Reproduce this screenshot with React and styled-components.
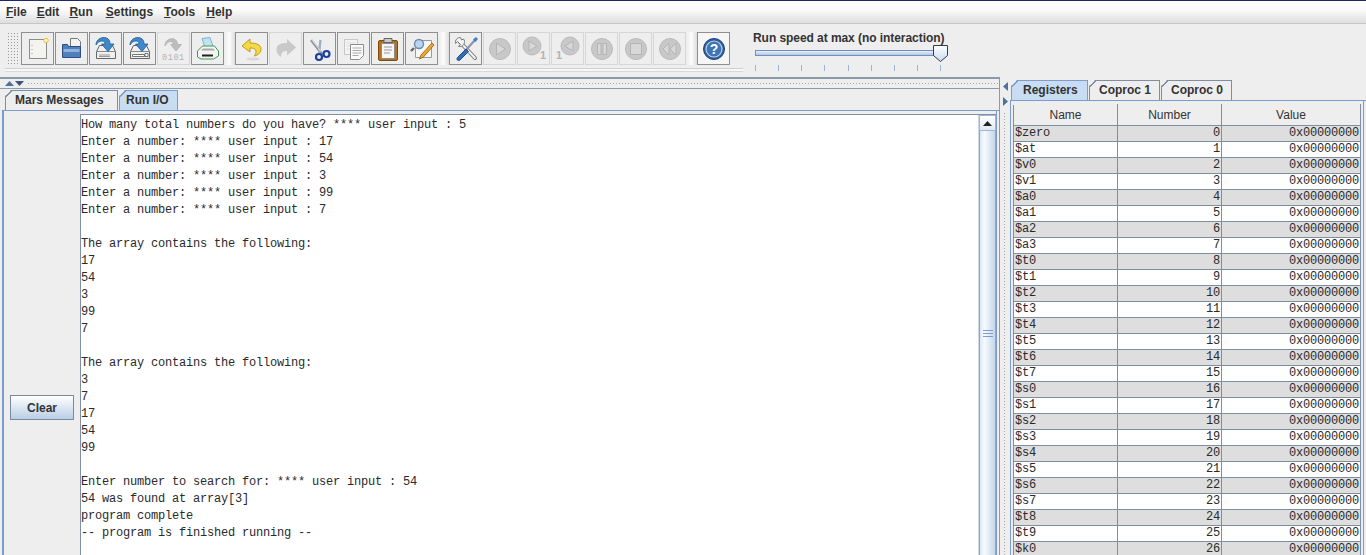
import React from 'react';
import styled, { createGlobalStyle } from 'styled-components';

const GlobalStyle = createGlobalStyle`
  html, body {
    margin: 0;
    padding: 0;
    background: #eeeeee;
    overflow: hidden;
  }
`;

const Frame = styled.div`
  width: 1366px;
  height: 555px;
  overflow: hidden;
  display: flex;
  flex-direction: column;
  background: #eeeeee;
  border-top: 1px solid #1c2a63;
  box-sizing: border-box;
  font-family: 'Liberation Sans', Arial, sans-serif;
  color: #333333;
`;

const MenuBar = styled.div`
  height: 22px;
  flex: none;
  display: flex;
  align-items: center;
  padding-left: 6px;
  background: linear-gradient(#ffffff, #fbfbfb 40%, #dedede);
  border-bottom: 1px solid #c6c6c6;
`;

const MenuItem = styled.span`
  font-size: 12px;
  font-weight: bold;
  margin-right: ${(p) => p.$gap}px;
  color: #333333;
  u { text-underline-offset: 1px; }
`;

const ToolRow = styled.div`
  height: 53px;
  flex: none;
  display: flex;
  padding-left: 5px;
`;

const ToolStrip = styled.div`
  width: 738px;
  height: 45px;
  box-sizing: border-box;
  display: flex;
  align-items: flex-start;
  padding-top: 8px;
  border-bottom: 1px solid #d0d0d0;
  box-shadow: 0 2px 0 #f7f7f7, 0 3px 0 #d8d8d8;
`;

const Gripper = styled.div`
  width: 13px;
  height: 33px;
  margin: 0 1px 0 2px;
  background-image: radial-gradient(#9a9a9a 0.8px, transparent 1px);
  background-size: 3px 3px;
`;

const ToolButton = styled.div`
  width: 33px;
  height: 33px;
  box-sizing: border-box;
  flex: none;
  margin-right: 1px;
  display: flex;
  align-items: center;
  justify-content: center;
  border: 1px solid ${(p) => (p.$off ? '#d6d6d6' : '#8f8f8f')};
  background: ${(p) => (p.$light ? '#f6f6f6' : '#eeeeee')};
`;

const GroupGap = styled.div`
  width: 10px;
  height: 33px;
  flex: none;
  background: linear-gradient(90deg, #eeeeee, #fcfcfc 45%, #dcdcdc);
`;

const SpeedPanel = styled.div`
  margin-left: 10px;
  padding-top: 7px;
  width: 200px;
`;

const SpeedLabel = styled.div`
  font-size: 12px;
  font-weight: bold;
  line-height: 14px;
  letter-spacing: -0.06px;
`;

const SliderBox = styled.div`
  position: relative;
  width: 194px;
  height: 16px;
`;

const SliderTrack = styled.div`
  position: absolute;
  left: 2px;
  top: 5px;
  width: 181px;
  height: 6px;
  box-sizing: border-box;
  border: 1px solid #6f8fc4;
  background: linear-gradient(#e6eef8, #b4c8e2);
`;

const SliderThumb = styled.svg`
  position: absolute;
  left: 180px;
  top: 0;
`;

const Ticks = styled.div`
  width: 186px;
  margin: 4px 0 0 2px;
  display: flex;
  justify-content: space-between;
`;

const Tick = styled.i`
  display: block;
  width: 1px;
  height: 6px;
  background: #9db5d2;
`;

const Main = styled.div`
  flex: 1;
  min-height: 0;
  display: flex;
`;

const LeftPane = styled.div`
  width: 1000px;
  box-sizing: border-box;
  flex: none;
  display: flex;
  flex-direction: column;
  border-right: 1px solid #8a9bae;
`;

const TopDivider = styled.div`
  height: 9px;
  flex: none;
  border-top: 2px solid #8a9bae;
  border-bottom: 1px solid #8a9bae;
  display: flex;
  align-items: center;
  padding-left: 5px;
  gap: 1px;
`;

const DotLine = styled.div`
  flex: 1;
  height: 3px;
  margin-left: 2px;
  background-image: radial-gradient(#a6a6a6 0.7px, transparent 1px);
  background-size: 3px 3px;
`;

const TabRow = styled.div`
  height: 21px;
  flex: none;
  display: flex;
  align-items: flex-end;
  padding-left: ${(p) => p.$inset}px;
  margin-top: ${(p) => p.$top}px;
  margin-left: ${(p) => p.$left}px;
  gap: 1px;
  border-bottom: 1px solid #7d9bcb;
`;

const Tab = styled.div`
  position: relative;
  box-sizing: border-box;
  width: ${(p) => p.$w}px;
  height: 20px;
  display: flex;
  align-items: center;
  padding: 0 0 1px ${(p) => p.$pad}px;
  font-size: 12px;
  font-weight: bold;
  color: #333333;
  background: ${(p) => (p.$active ? '#c8ddf2' : '#eeeeee')};
  border: 1px solid ${(p) => (p.$active ? '#7d9bcb' : '#7f8fa3')};
  border-bottom: none;
  clip-path: polygon(6px 0, 100% 0, 100% 100%, 0 100%, 0 6px);
  &::before {
    content: '';
    position: absolute;
    left: -1px;
    top: -1px;
    width: 7px;
    height: 7px;
    background: linear-gradient(135deg, transparent 46%, ${(p) => (p.$active ? '#7d9bcb' : '#7f8fa3')} 46% 58%, transparent 58%);
  }
`;

const RunPane = styled.div`
  flex: 1;
  min-height: 0;
  display: flex;
  margin-left: 2px;
  margin-right: 2px;
  padding-top: 3px;
  border-left: 2px solid #7d9bcb;
  border-right: 1px solid #7d9bcb;
`;

const ClearColumn = styled.div`
  width: 76px;
  flex: none;
  display: flex;
  justify-content: center;
  padding-top: 281px;
  box-sizing: border-box;
`;

const ClearButton = styled.button`
  width: 64px;
  height: 25px;
  padding: 0;
  box-sizing: border-box;
  border: 1px solid #7a8a9c;
  background: linear-gradient(#ffffff, #dfe9f4 45%, #b9cfe5);
  font-family: 'Liberation Sans', Arial, sans-serif;
  font-size: 12px;
  font-weight: bold;
  color: #333333;
`;

const Console = styled.div`
  flex: 1;
  min-width: 0;
  display: flex;
  background: #ffffff;
  border-left: 1px solid #7f90a4;
  border-top: 1px solid #7f90a4;
`;

const ConsoleText = styled.pre`
  flex: 1;
  margin: 0;
  padding: 2px 0 0 0;
  font-family: 'Liberation Mono', 'Courier New', monospace;
  font-size: 12px;
  line-height: 17px;
  letter-spacing: -0.2px;
  color: #2a2a2a;
`;

const ScrollBar = styled.div`
  width: 17px;
  flex: none;
  display: flex;
  flex-direction: column;
  border-left: 1px solid #cfd9e6;
`;

const ScrollUp = styled.div`
  height: 16px;
  flex: none;
  display: flex;
  align-items: center;
  justify-content: center;
  background: linear-gradient(#ffffff, #dfe9f4);
  border: 1px solid #9db5d6;
  box-sizing: border-box;
`;

const ScrollThumb = styled.div`
  flex: 1;
  display: flex;
  align-items: center;
  justify-content: center;
  padding-bottom: 20px;
  border-left: 1px solid #8aa6d0;
  border-right: 1px solid #8aa6d0;
  background: linear-gradient(90deg, #dbe6f3, #f8fafd 30%, #c4d6ea);
`;

const Grip = styled.div`
  width: 10px;
  height: 5px;
  border-top: 1px solid #7d9bcb;
  border-bottom: 1px solid #7d9bcb;
  position: relative;
  &::after {
    content: '';
    position: absolute;
    left: 0;
    right: 0;
    top: 2px;
    height: 1px;
    background: #7d9bcb;
  }
`;

const SideDivider = styled.div`
  width: 10px;
  flex: none;
  display: flex;
  flex-direction: column;
  align-items: center;
  padding-top: 5px;
  box-sizing: border-box;
  gap: 6px;
`;

const SideDots = styled.div`
  flex: 1;
  width: 4px;
  background-image: radial-gradient(#a6a6a6 0.7px, transparent 1px);
  background-size: 3px 3px;
`;

const RightPane = styled.div`
  flex: 1;
  min-width: 0;
  display: flex;
  flex-direction: column;
`;

const RegisterPane = styled.div`
  flex: 1;
  min-height: 0;
  padding: 3px 3px 0 2px;
  margin-right: 2px;
  border-left: 1px solid #7d9bcb;
  border-right: 1px solid #7d9bcb;
`;

const RegTable = styled.table`
  width: 348px;
  table-layout: fixed;
  border-collapse: collapse;
  border: 1px solid #7f8fa3;
  font-size: 12px;
`;

const HeadCell = styled.th`
  height: 20px;
  padding: 0;
  font-weight: normal;
  font-size: 12px;
  color: #333333;
  text-align: center;
  background: #eeeeee;
  border: 1px solid #7f8fa3;
  border-top: 1px solid #eeeeee;
`;

const RegCell = styled.td`
  height: 15px;
  padding: 0 1px;
  line-height: 15px;
  font-family: 'Liberation Mono', 'Courier New', monospace;
  font-size: 12px;
  letter-spacing: -0.2px;
  color: #2a2a2a;
  overflow: hidden;
  text-align: ${(p) => (p.$right ? 'right' : 'left')};
  background: ${(p) => (p.$shade ? '#dedede' : '#ffffff')};
  border: 1px solid #7f8fa3;
  border-top: none;
`;

const consoleLines = `How many total numbers do you have? **** user input : 5
Enter a number: **** user input : 17
Enter a number: **** user input : 54
Enter a number: **** user input : 3
Enter a number: **** user input : 99
Enter a number: **** user input : 7

The array contains the following:
17
54
3
99
7

The array contains the following:
3
7
17
54
99

Enter number to search for: **** user input : 54
54 was found at array[3]
program complete
-- program is finished running --`;

const registers = [
  '$zero', '$at', '$v0', '$v1', '$a0', '$a1', '$a2', '$a3',
  '$t0', '$t1', '$t2', '$t3', '$t4', '$t5', '$t6', '$t7',
  '$s0', '$s1', '$s2', '$s3', '$s4', '$s5', '$s6', '$s7',
  '$t8', '$t9', '$k0',
];

const Ico = ({ children }) => (
  <svg width="26" height="26" viewBox="0 0 26 26" fill="none">{children}</svg>
);

const NewIcon = () => (
  <Ico>
    <rect x="4.5" y="3.5" width="17" height="19" fill="#f3f3f0" stroke="#8c8c8c" />
    <path d="M7 9v1M7 13v1M7 17v1" stroke="#999" />
    <circle cx="21" cy="4.5" r="2.2" fill="#fff6b8" stroke="#e0c43a" />
  </Ico>
);

const OpenIcon = () => (
  <Ico>
    <path d="M11.5 2.5h7l3 3v7h-10z" fill="#f2f2f2" stroke="#777" />
    <path d="M3.5 8.5h5l1 2h12v11h-18z" fill="#4f7fbd" stroke="#2c4f80" />
    <path d="M4.5 13h16v3h-16z" fill="#8fb3de" />
  </Ico>
);

const SaveIcon = ({ as }) => (
  <Ico>
    <path d="M3.5 15.5l3-6h13l3 6v7h-19z" fill="#efefef" stroke="#666" />
    <path d="M4 15.5h18" stroke="#888" />
    {as ? (
      <path d="M5.500 18.500h12v2h-12zM18 17.500h3v3h-3z" fill="#fff" stroke="#555" strokeWidth=".8" />
    ) : (
      <path d="M6 19h11M6 20.500h11" stroke="#999" />
    )}
    <path d="M3 9C3 3 9 .5 13.500 2c2.500 1 3.500 3 3.500 6h4l-6 7.500L8.500 8H12c0-2-1-3-3-3-2.500 0-4.500 1.500-6 4z" fill="#3f88c9" stroke="#1f5c96" strokeWidth=".8" />
  </Ico>
);

const DumpIcon = () => (
  <Ico>
    <path d="M4 10C4 4 9 2 13 3c2.500 1 3.500 3 3.500 5.500h4L15 15 9.500 8.500H12c0-2-1-3-2.500-3-2 0-4 1.500-5.500 4.500z" fill="#bdbdbd" stroke="#b0b0b0" strokeWidth=".8" />
    <text x="1" y="24" fontFamily="'Liberation Mono', monospace" fontSize="8.500" letterSpacing=".6" fill="#b4b4b4">0101</text>
  </Ico>
);

const PrintIcon = () => (
  <Ico>
    <path d="M7 2.500l8-1 3.500 10H10z" fill="#bfe3f2" stroke="#6aa5bf" strokeWidth=".8" />
    <path d="M2.500 15l5-5h12l4 5v5l-5 3H6l-3.500-2z" fill="#f4f4f4" stroke="#3f9a4a" />
    <path d="M8 12.500h10l2 2H6z" fill="#aaa" />
    <path d="M7 18.500h11v2H7z" fill="#222" />
  </Ico>
);

const UndoIcon = () => (
  <Ico>
    <path d="M11 3L3 10l8 6v-4c4 0 6 1 6 4 0 2-1 3-2 4 5-1 7-4 7-7 0-4-4-6-11-6z" fill="#f5d84a" stroke="#c29b15" />
    <ellipse cx="14" cy="23" rx="7" ry="1.500" fill="#d8d8d8" />
  </Ico>
);

const RedoIcon = () => (
  <Ico>
    <path d="M14 3l9 8.500-9 8v-4.500c-4 0-6 1.500-6 6-3-2-4.500-4.500-4.500-7.500 0-5 4-6.500 10.500-6.500z" fill="#c9c9c9" />
  </Ico>
);

const CutIcon = () => (
  <Ico>
    <path d="M4 4l11 14" stroke="#8d95a8" strokeWidth="2.600" />
    <path d="M13.500 4L12 17" stroke="#a7adbc" strokeWidth="2.400" />
    <path d="M4.500 3.500l9.500 12" stroke="#dde0e6" />
    <circle cx="12" cy="21" r="3" stroke="#1d3f9e" strokeWidth="2.200" fill="#eee" />
    <circle cx="19.500" cy="18" r="3" stroke="#1d3f9e" strokeWidth="2.200" fill="#eee" />
  </Ico>
);

const CopyIcon = () => (
  <Ico>
    <rect x="3.500" y="3.500" width="13" height="15" fill="#f2f2f2" stroke="#c8c8c8" />
    <path d="M5.500 7h9M5.500 10h9M5.500 13h9" stroke="#ddd" />
    <path d="M9.500 8.500h13v11l-4 4h-9z" fill="#fafafa" stroke="#8c8c8c" />
    <path d="M11.500 12h9M11.500 14.500h9M11.500 17h9M11.500 19.500h6" stroke="#aaa" />
  </Ico>
);

const PasteIcon = () => (
  <Ico>
    <rect x="3.500" y="4.500" width="19" height="20" rx="1.500" fill="#b2741d" stroke="#7b4c0e" />
    <rect x="6.500" y="7.500" width="13" height="15" fill="#f7f7f7" stroke="#8c8c8c" />
    <path d="M9 2.500h8v4H9z" fill="#c8c8c8" stroke="#666" />
    <path d="M9 11h8M9 14h8M9 17h6" stroke="#999" />
  </Ico>
);

const FindIcon = () => (
  <Ico>
    <path d="M6.500 4.500h16v17h-16z" fill="#f7f7f7" stroke="#9a9a9a" />
    <circle cx="10" cy="8" r="4.500" fill="#b8d4ee" stroke="#6f8bab" strokeWidth="1.400" />
    <path d="M5 12l-3 3" stroke="#666" strokeWidth="2.400" />
    <path d="M23 7L12 19l-1.500 4 4-2L25 9z" fill="#eea92a" stroke="#8a5a10" strokeWidth=".8" />
  </Ico>
);

const ToolsIcon = () => (
  <Ico>
    <path d="M7 6l15 16" stroke="#777" strokeWidth="4" strokeLinecap="round" />
    <path d="M7 6l15 16" stroke="#f4f4f4" strokeWidth="2" strokeLinecap="round" />
    <path d="M7.500 1.500C4 1.500 2 4 2.500 7.500l2-2 3 3-2 2c3.500.5 6-1.500 6-5 0-1-.5-2-1-2.500l-2 1z" fill="#f4f4f4" stroke="#777" />
    <path d="M22 4L12 15" stroke="#8d95a8" strokeWidth="2.200" />
    <path d="M13 13l-8.500 8.500c-1.500 2 .5 4 2.500 2.500l8.500-8.500z" fill="#2f6fb5" stroke="#1f4d85" />
    <path d="M20 3.500l3-2.500 2 2-2.500 3z" fill="#3f7fc5" />
  </Ico>
);

const Disc = ({ children }) => (
  <Ico>
    <circle cx="13" cy="13" r="10.500" fill="#c8c8c8" stroke="#bababa" />
    {children}
  </Ico>
);

const PlayIcon = () => <Disc><path d="M9.500 7l9 6-9 6z" fill="#d8d8d8" stroke="#b4b4b4" /></Disc>;
const PauseIcon = () => <Disc><path d="M8.500 7.500h3.500v11H8.500zM14 7.500h3.500v11H14z" fill="#d8d8d8" stroke="#b4b4b4" /></Disc>;
const StopIcon = () => <Disc><rect x="7.500" y="7.500" width="11" height="11" fill="#d8d8d8" stroke="#b4b4b4" /></Disc>;
const ResetIcon = () => <Disc><path d="M12 7l-6 6 6 6zM19 7l-6 6 6 6z" fill="#d8d8d8" stroke="#b4b4b4" /></Disc>;

const StepIcon = () => (
  <Ico>
    <circle cx="11" cy="10" r="9" fill="#c8c8c8" stroke="#bababa" />
    <path d="M8 5l8 5-8 5z" fill="#d8d8d8" stroke="#b4b4b4" />
    <text x="19" y="23" fontFamily="'Liberation Sans', sans-serif" fontWeight="bold" fontSize="11" fill="#b4b4b4">1</text>
  </Ico>
);

const BackIcon = () => (
  <Ico>
    <circle cx="15" cy="10" r="9" fill="#c8c8c8" stroke="#bababa" />
    <path d="M18 5l-8 5 8 5z" fill="#d8d8d8" stroke="#b4b4b4" />
    <text x="1" y="23" fontFamily="'Liberation Sans', sans-serif" fontWeight="bold" fontSize="11" fill="#b4b4b4">1</text>
  </Ico>
);

const HelpIcon = () => (
  <Ico>
    <circle cx="13" cy="13" r="10.500" fill="#2f5f9f" stroke="#1d4178" />
    <circle cx="13" cy="13" r="8" fill="#3f74b5" stroke="#bcd0e8" strokeWidth="1.200" />
    <text x="13" y="18" textAnchor="middle" fontFamily="'Liberation Sans', sans-serif" fontWeight="bold" fontSize="14" fill="#ffffff">?</text>
  </Ico>
);

const Arrow = ({ d, fill }) => (
  <svg width="9" height="6" viewBox="0 0 9 6"><path d={d} fill={fill} /></svg>
);

const SideArrow = ({ d }) => (
  <svg width="5" height="9" viewBox="0 0 5 9"><path d={d} fill="#4f6f9f" /></svg>
);

export default function App() {
  return (
    <>
      <GlobalStyle />
      <Frame>
        <MenuBar>
          <MenuItem $gap={10}><u>F</u>ile</MenuItem>
          <MenuItem $gap={10}><u>E</u>dit</MenuItem>
          <MenuItem $gap={13}><u>R</u>un</MenuItem>
          <MenuItem $gap={11}><u>S</u>ettings</MenuItem>
          <MenuItem $gap={11}><u>T</u>ools</MenuItem>
          <MenuItem $gap={0}><u>H</u>elp</MenuItem>
        </MenuBar>

        <ToolRow>
          <ToolStrip>
            <Gripper />
            <ToolButton><NewIcon /></ToolButton>
            <ToolButton><OpenIcon /></ToolButton>
            <ToolButton><SaveIcon /></ToolButton>
            <ToolButton><SaveIcon as /></ToolButton>
            <ToolButton $off><DumpIcon /></ToolButton>
            <ToolButton><PrintIcon /></ToolButton>
            <GroupGap />
            <ToolButton><UndoIcon /></ToolButton>
            <ToolButton $off><RedoIcon /></ToolButton>
            <ToolButton><CutIcon /></ToolButton>
            <ToolButton><CopyIcon /></ToolButton>
            <ToolButton><PasteIcon /></ToolButton>
            <ToolButton><FindIcon /></ToolButton>
            <GroupGap />
            <ToolButton><ToolsIcon /></ToolButton>
            <ToolButton $off><PlayIcon /></ToolButton>
            <ToolButton $off><StepIcon /></ToolButton>
            <ToolButton $off><BackIcon /></ToolButton>
            <ToolButton $off><PauseIcon /></ToolButton>
            <ToolButton $off><StopIcon /></ToolButton>
            <ToolButton $off><ResetIcon /></ToolButton>
            <GroupGap />
            <ToolButton $light><HelpIcon /></ToolButton>
          </ToolStrip>
          <SpeedPanel>
            <SpeedLabel>Run speed at max (no interaction)</SpeedLabel>
            <SliderBox>
              <SliderTrack />
              <SliderThumb width="15" height="17" viewBox="0 0 15 17">
                <defs>
                  <linearGradient id="thumbFill" x1="0" y1="0" x2="0" y2="1">
                    <stop offset="0" stopColor="#ffffff" />
                    <stop offset="1" stopColor="#c8daee" />
                  </linearGradient>
                </defs>
                <path d="M.5.5h14v10l-7 6-7-6z" fill="url(#thumbFill)" stroke="#333c4a" />
              </SliderThumb>
            </SliderBox>
            <Ticks>
              {Array.from({ length: 9 }).map((_, i) => <Tick key={i} />)}
            </Ticks>
          </SpeedPanel>
        </ToolRow>

        <Main>
          <LeftPane>
            <TopDivider>
              <Arrow d="M0 5L4.500 0 9 5z" fill="#4f6f9f" />
              <Arrow d="M0 0L4.500 5 9 0z" fill="#3f5478" />
              <DotLine />
            </TopDivider>
            <TabRow $inset={3} $top={0} $left={2}>
              <Tab $w={113} $pad={9}>Mars Messages</Tab>
              <Tab $w={59} $pad={6} $active>Run I/O</Tab>
            </TabRow>
            <RunPane>
              <ClearColumn><ClearButton>Clear</ClearButton></ClearColumn>
              <Console>
                <ConsoleText>{consoleLines}</ConsoleText>
                <ScrollBar>
                  <ScrollUp>
                    <svg width="9" height="5" viewBox="0 0 9 5"><path d="M0 5L4.500 0 9 5z" fill="#222" /></svg>
                  </ScrollUp>
                  <ScrollThumb><Grip /></ScrollThumb>
                </ScrollBar>
              </Console>
            </RunPane>
          </LeftPane>

          <SideDivider>
            <SideArrow d="M5 0L0 4.500 5 9z" />
            <SideArrow d="M0 0L5 4.500 0 9z" />
            <SideDots />
          </SideDivider>

          <RightPane>
            <TabRow $inset={1} $top={2} $left={0}>
              <Tab $w={77} $pad={11} $active>Registers</Tab>
              <Tab $w={71} $pad={9}>Coproc 1</Tab>
              <Tab $w={71} $pad={9}>Coproc 0</Tab>
            </TabRow>
            <RegisterPane>
              <RegTable>
                <colgroup>
                  <col style={{ width: 104 }} />
                  <col style={{ width: 104 }} />
                  <col />
                </colgroup>
                <thead>
                  <tr>
                    <HeadCell>Name</HeadCell>
                    <HeadCell>Number</HeadCell>
                    <HeadCell>Value</HeadCell>
                  </tr>
                </thead>
                <tbody>
                  {registers.map((name, i) => (
                    <tr key={name}>
                      <RegCell $shade={i % 2 === 0}>{name}</RegCell>
                      <RegCell $shade={i % 2 === 0} $right>{i}</RegCell>
                      <RegCell $shade={i % 2 === 0} $right>0x00000000</RegCell>
                    </tr>
                  ))}
                </tbody>
              </RegTable>
            </RegisterPane>
          </RightPane>
        </Main>
      </Frame>
    </>
  );
}
